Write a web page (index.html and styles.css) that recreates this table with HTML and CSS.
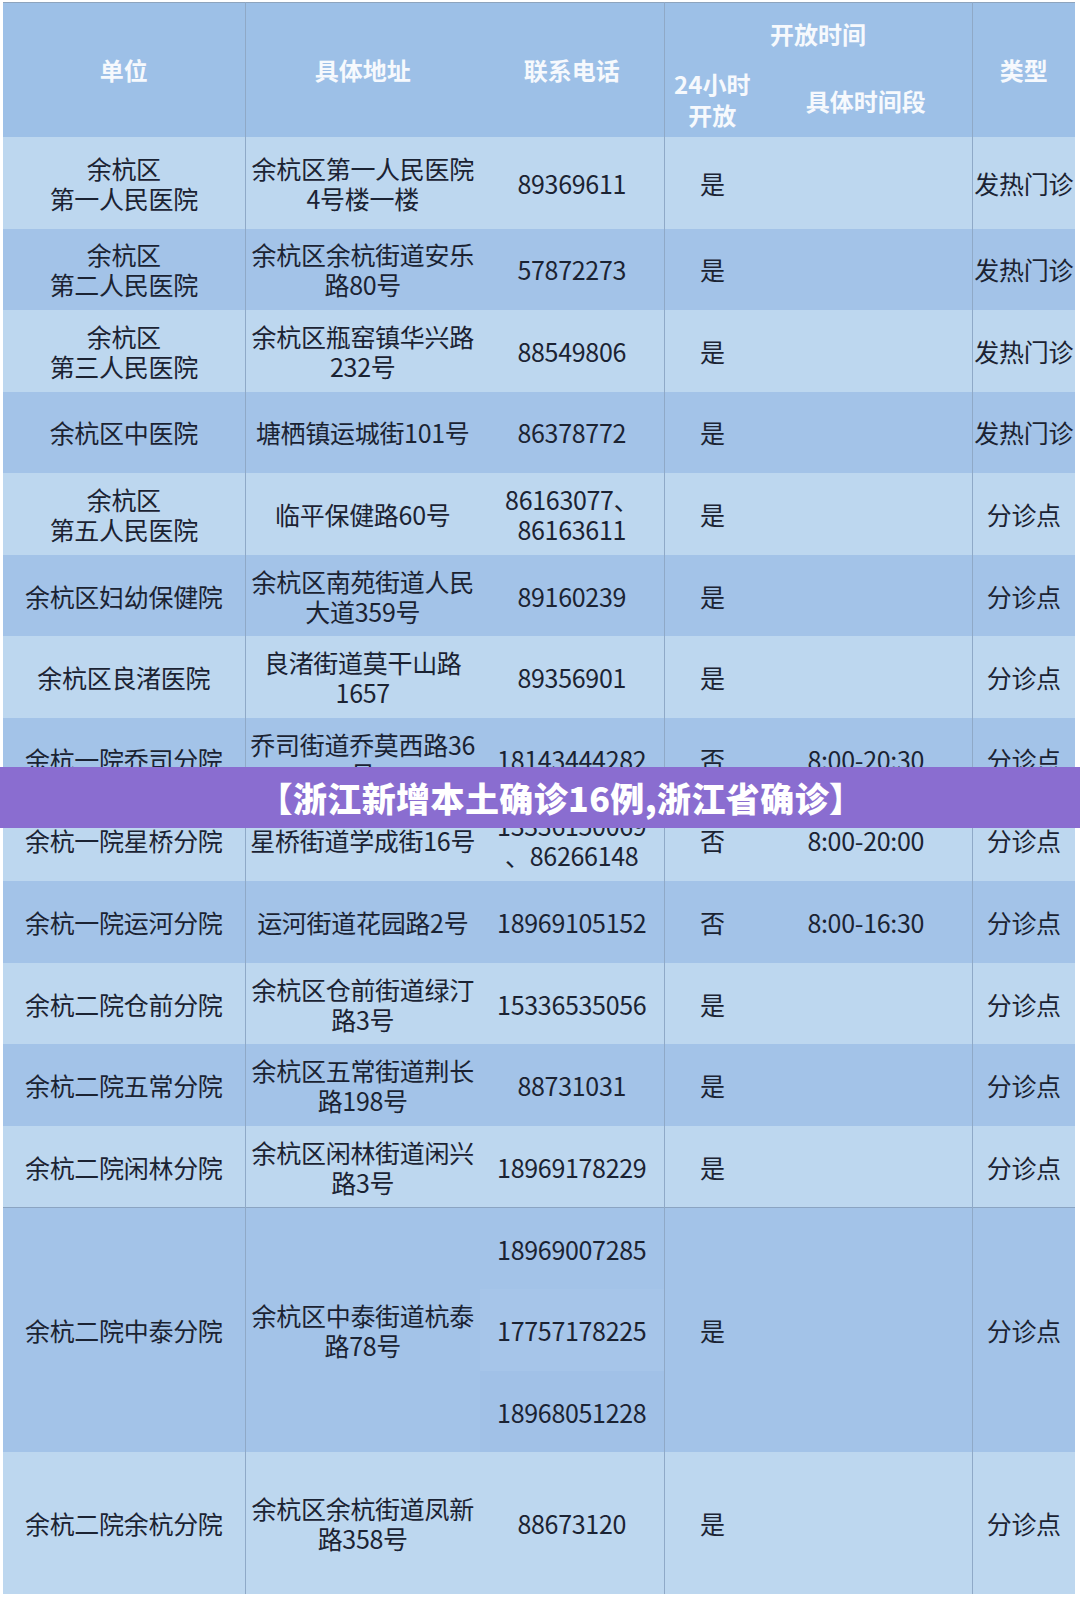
FILE: index.html
```html
<!DOCTYPE html>
<html lang="zh-CN">
<head>
<meta charset="utf-8">
<title>余杭区发热门诊及分诊点</title>
<link rel="stylesheet" href="styles.css">
</head>
<body>
<div class="sheet">
  <table class="grid">
    <colgroup>
      <col class="c-unit"><col class="c-addr"><col class="c-tel"><col class="c-24"><col class="c-time"><col class="c-type">
    </colgroup>
    <thead>
      <tr class="h1">
        <th rowspan="2" class="vr">单位</th>
        <th rowspan="2">具体地址</th>
        <th rowspan="2" class="vr">联系电话</th>
        <th colspan="2" class="vr">开放时间</th>
        <th rowspan="2">类型</th>
      </tr>
      <tr class="h2">
        <th class="sub">24小时<br>开放</th>
        <th class="vr">具体时间段</th>
      </tr>
    </thead>
    <tbody>
      <tr class="l first"><td class="vr">余杭区<br>第一人民医院</td><td>余杭区第一人民医院<br>4号楼一楼</td><td class="vr">89369611</td><td>是</td><td class="vr"></td><td>发热门诊</td></tr>
      <tr class="d"><td class="vr">余杭区<br>第二人民医院</td><td>余杭区余杭街道安乐<br>路80号</td><td class="vr">57872273</td><td>是</td><td class="vr"></td><td>发热门诊</td></tr>
      <tr class="l"><td class="vr">余杭区<br>第三人民医院</td><td>余杭区瓶窑镇华兴路<br>232号</td><td class="vr">88549806</td><td>是</td><td class="vr"></td><td>发热门诊</td></tr>
      <tr class="d"><td class="vr">余杭区中医院</td><td>塘栖镇运城街101号</td><td class="vr">86378772</td><td>是</td><td class="vr"></td><td>发热门诊</td></tr>
      <tr class="l"><td class="vr">余杭区<br>第五人民医院</td><td>临平保健路60号</td><td class="vr">86163077、<br>86163611</td><td>是</td><td class="vr"></td><td>分诊点</td></tr>
      <tr class="d"><td class="vr">余杭区妇幼保健院</td><td>余杭区南苑街道人民<br>大道359号</td><td class="vr">89160239</td><td>是</td><td class="vr"></td><td>分诊点</td></tr>
      <tr class="l"><td class="vr">余杭区良渚医院</td><td>良渚街道莫干山路<br>1657</td><td class="vr">89356901</td><td>是</td><td class="vr"></td><td>分诊点</td></tr>
      <tr class="d"><td class="vr">余杭一院乔司分院</td><td>乔司街道乔莫西路36<br>号</td><td class="vr">18143444282</td><td>否</td><td class="vr">8:00-20:30</td><td>分诊点</td></tr>
      <tr class="l"><td class="vr">余杭一院星桥分院</td><td>星桥街道学成街16号</td><td class="vr">13336150069<br>、86266148</td><td>否</td><td class="vr">8:00-20:00</td><td>分诊点</td></tr>
      <tr class="d"><td class="vr">余杭一院运河分院</td><td>运河街道花园路2号</td><td class="vr">18969105152</td><td>否</td><td class="vr">8:00-16:30</td><td>分诊点</td></tr>
      <tr class="l"><td class="vr">余杭二院仓前分院</td><td>余杭区仓前街道绿汀<br>路3号</td><td class="vr">15336535056</td><td>是</td><td class="vr"></td><td>分诊点</td></tr>
      <tr class="d"><td class="vr">余杭二院五常分院</td><td>余杭区五常街道荆长<br>路198号</td><td class="vr">88731031</td><td>是</td><td class="vr"></td><td>分诊点</td></tr>
      <tr class="l"><td class="vr">余杭二院闲林分院</td><td>余杭区闲林街道闲兴<br>路3号</td><td class="vr">18969178229</td><td>是</td><td class="vr"></td><td>分诊点</td></tr>
      <tr class="d split"><td rowspan="3" class="vr">余杭二院中泰分院</td><td rowspan="3">余杭区中泰街道杭泰<br>路78号</td><td class="vr">18969007285</td><td rowspan="3">是</td><td rowspan="3" class="vr"></td><td rowspan="3">分诊点</td></tr>
      <tr class="d"><td class="vr tel-b">17757178225</td></tr>
      <tr class="d"><td class="vr tel-c">18968051228</td></tr>
      <tr class="l tall"><td class="vr">余杭二院余杭分院</td><td>余杭区余杭街道凤新<br>路358号</td><td class="vr">88673120</td><td>是</td><td class="vr"></td><td>分诊点</td></tr>
    </tbody>
  </table>
  <div class="banner">【浙江新增本土确诊16例,浙江省确诊】</div>
</div>
</body>
</html>
```

FILE: styles.css
```css
html, body {
  margin: 0;
  padding: 0;
  background: #ffffff;
}

body {
  font-family: "Noto Sans CJK SC", "Noto Sans", sans-serif;
}

.sheet {
  position: relative;
  width: 1080px;
  height: 1598px;
  padding: 2px 5px 0 3px;
  box-sizing: border-box;
}

.grid {
  border-collapse: collapse;
  table-layout: fixed;
  width: 1072px;
  border-top: 1px solid #8ea4bd;
}

.c-unit { width: 242px; }
.c-addr { width: 235px; }
.c-tel  { width: 184px; }
.c-24   { width: 96px; }
.c-time { width: 212px; }
.c-type { width: 103px; }

.grid th,
.grid td {
  padding: 0;
  text-align: center;
  vertical-align: middle;
  white-space: nowrap;
}

.grid th {
  background: #9dc0e7;
  color: #f6f9fd;
  font-weight: 700;
  font-size: 24px;
  line-height: 31px;
}

.h1 { height: 62px; }
.h2 { height: 72px; }

.grid th.sub {
  vertical-align: top;
  padding-top: 3px;
}

.grid td {
  color: #1b2333;
  font-size: 25px;
  line-height: 30px;
  letter-spacing: -0.3px;
}

.vr { border-right: 1px solid #8fa9c7; }

tr.l td { background: #bdd7ef; }
tr.d td { background: #a3c3e8; }

tbody tr { height: 81.6px; }
tbody tr.first { height: 92px; }
tbody tr.split td { border-top: 1px solid #8ba4c2; }
tbody tr.tall { height: 142px; }

.tel-b { background: #a6c5e9 !important; }
.tel-c { background: #a1c1e7 !important; }

.banner {
  position: absolute;
  left: 0;
  right: 0;
  top: 767px;
  height: 61px;
  background: #8a6dd0;
  color: #ffffff;
  font-weight: 900;
  font-size: 34px;
  letter-spacing: 0.4px;
  line-height: 61px;
  text-align: center;
  padding-left: 42px;
  white-space: nowrap;
}
```
